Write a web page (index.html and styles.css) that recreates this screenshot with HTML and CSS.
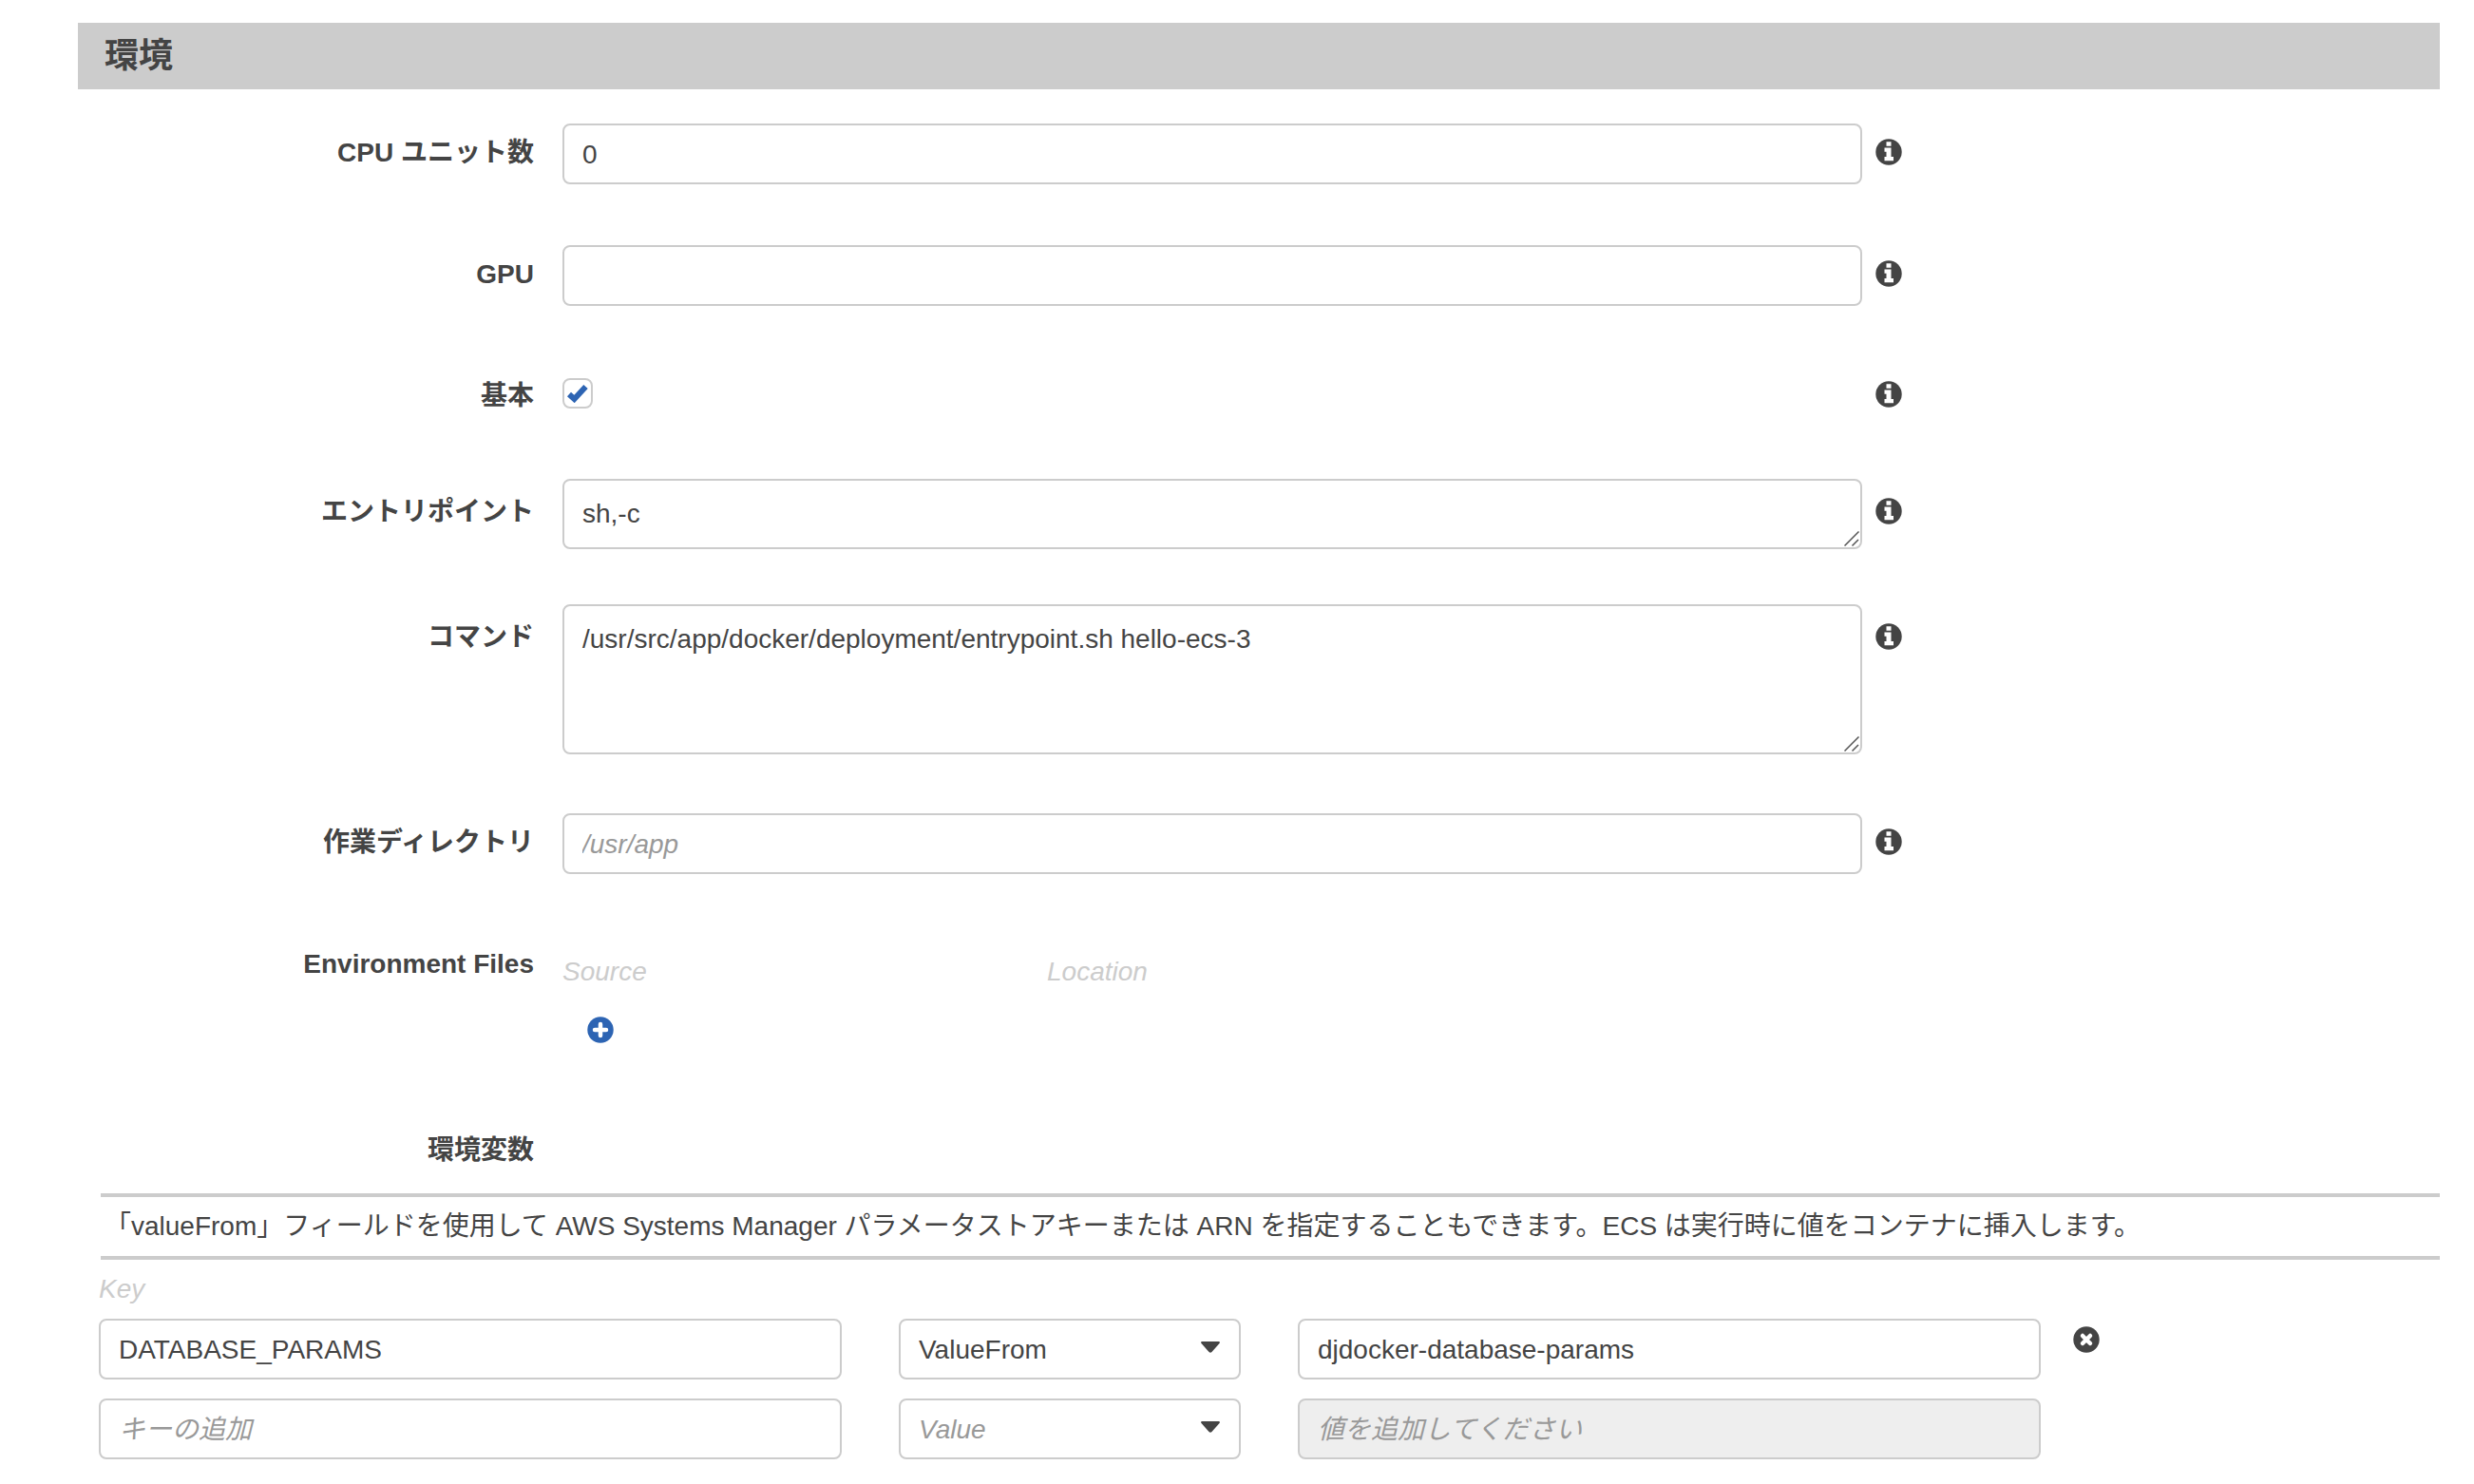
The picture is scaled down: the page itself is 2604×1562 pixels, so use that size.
FILE: index.html
```html
<!DOCTYPE html>
<html lang="ja">
<head>
<meta charset="utf-8">
<meta name="viewport" content="width=device-width, initial-scale=1">
<title>環境</title>
<link rel="stylesheet" href="styles.css">
</head>
<body>
<svg class="sprite" aria-hidden="true">
  <symbol id="info" viewBox="0 0 28 28">
    <circle cx="14" cy="14" r="13.700"/>
    <path fill="#fff" d="M11.500 3.200h5v4.500h-5zM9.500 9.500h7v9.500h2.500v4.300h-9.500v-4.300h2v-5.200h-2z"/>
  </symbol>
  <symbol id="plus" viewBox="0 0 28 28">
    <circle cx="14" cy="14" r="13.700"/>
    <path stroke="#fff" stroke-width="4.500" stroke-linecap="round" d="M14 8v12M8 14h12"/>
  </symbol>
  <symbol id="remove" viewBox="0 0 28 28">
    <circle cx="14" cy="14" r="13.700"/>
    <path stroke="#fff" stroke-width="4.500" stroke-linecap="round" d="M10 10l8 8M18 10l-8 8"/>
  </symbol>
  <symbol id="caret" viewBox="0 0 20 12">
    <path d="M1.500 0h17c1.300 0 1.900 1 1 2l-8 9c-.9 1-2.100 1-3 0l-8-9c-.9-1-.3-2 1-2z"/>
  </symbol>
  <symbol id="grip" viewBox="0 0 16 16">
    <path fill="none" stroke="#555" stroke-width="1.500" d="M.5 15.500l15-15M8.500 15.500l6.500-6.500"/>
  </symbol>
</svg>
<main class="page">
  <h2 class="section-title">環境</h2>
  <form class="form">
    <div class="row">
      <label class="label" for="cpu">CPU ユニット数</label>
      <div class="field"><input class="control" id="cpu" type="text" value="0"></div>
      <button class="icon-button info" type="button" aria-label="CPU ユニット数の情報"><svg class="icon"><use href="#info"/></svg></button>
    </div>
    <div class="row">
      <label class="label" for="gpu">GPU</label>
      <div class="field"><input class="control" id="gpu" type="text"></div>
      <button class="icon-button info" type="button" aria-label="GPU の情報"><svg class="icon"><use href="#info"/></svg></button>
    </div>
    <div class="row row-check">
      <label class="label" for="essential">基本</label>
      <div class="field check">
        <input class="checkbox" id="essential" type="checkbox" checked>
        <svg class="tick" viewBox="0 0 24 20" aria-hidden="true"><path d="M3 11l5.500 5L20.500 3"/></svg>
      </div>
      <button class="icon-button info" type="button" aria-label="基本の情報"><svg class="icon"><use href="#info"/></svg></button>
    </div>
    <div class="row row-area row-entry">
      <label class="label" for="entry">エントリポイント</label>
      <div class="field">
        <textarea class="control area" id="entry" rows="1">sh,-c</textarea>
        <svg class="grip" aria-hidden="true"><use href="#grip"/></svg>
      </div>
      <button class="icon-button info" type="button" aria-label="エントリポイントの情報"><svg class="icon"><use href="#info"/></svg></button>
    </div>
    <div class="row row-area row-command">
      <label class="label" for="command">コマンド</label>
      <div class="field">
        <textarea class="control area area-tall" id="command" rows="3">/usr/src/app/docker/deployment/entrypoint.sh hello-ecs-3</textarea>
        <svg class="grip" aria-hidden="true"><use href="#grip"/></svg>
      </div>
      <button class="icon-button info" type="button" aria-label="コマンドの情報"><svg class="icon"><use href="#info"/></svg></button>
    </div>
    <div class="row">
      <label class="label" for="workdir">作業ディレクトリ</label>
      <div class="field"><input class="control" id="workdir" type="text" placeholder="/usr/app"></div>
      <button class="icon-button info" type="button" aria-label="作業ディレクトリの情報"><svg class="icon"><use href="#info"/></svg></button>
    </div>
    <div class="row row-files">
      <div class="label">Environment Files</div>
      <div class="field files">
        <div class="files-head"><span>Source</span><span>Location</span></div>
        <button class="icon-button add" type="button" aria-label="Add environment file"><svg class="icon"><use href="#plus"/></svg></button>
      </div>
    </div>
    <div class="row row-heading">
      <div class="label">環境変数</div>
    </div>
    <p class="note">「valueFrom」フィールドを使用して AWS Systems Manager パラメータストアキーまたは ARN を指定することもできます。ECS は実行時に値をコンテナに挿入します。</p>
    <div class="vars">
      <div class="vars-head">Key</div>
      <div class="var">
        <div class="cell"><input class="control" type="text" aria-label="Key" value="DATABASE_PARAMS"></div>
        <div class="cell">
          <div class="select">
            <select class="control" aria-label="Type"><option>ValueFrom</option><option>Value</option></select>
            <svg class="caret" aria-hidden="true"><use href="#caret"/></svg>
          </div>
        </div>
        <div class="cell cell-last"><input class="control" type="text" aria-label="Value" value="djdocker-database-params"></div>
        <button class="icon-button remove" type="button" aria-label="削除"><svg class="icon"><use href="#remove"/></svg></button>
      </div>
      <div class="var">
        <div class="cell"><input class="control" type="text" aria-label="Key" placeholder="キーの追加"></div>
        <div class="cell">
          <div class="select">
            <select class="control unset" aria-label="Type"><option>Value</option><option>ValueFrom</option></select>
            <svg class="caret" aria-hidden="true"><use href="#caret"/></svg>
          </div>
        </div>
        <div class="cell cell-last"><input class="control" type="text" aria-label="Value" placeholder="値を追加してください" disabled></div>
      </div>
    </div>
  </form>
</main>
</body>
</html>
```
FILE: styles.css
```css
* {
  box-sizing: border-box;
}

body {
  margin: 0;
  background: #fff;
  color: #444;
  font: 28px/32px "Liberation Sans", "Noto Sans CJK JP", sans-serif;
}

.sprite {
  display: none;
}

.page {
  padding: 24px 36px 26px 82px;
}

.section-title {
  margin: 0 0 36px;
  padding: 0 28px;
  background: #ccc;
  font-size: 36px;
  line-height: 70px;
}

.form {
  padding-left: 22px;
}

.row {
  display: grid;
  grid-template-columns: 488fr 1368fr 608fr;
  align-items: start;
  margin-bottom: 64px;
}

.label {
  padding-right: 30px;
  font-weight: bold;
  line-height: 62px;
  text-align: right;
}

.field {
  position: relative;
  display: flex;
}

.control {
  width: 100%;
  height: 64px;
  margin: 0;
  padding: 2px 20px 0 19px;
  border: 2px solid #ccc;
  border-radius: 8px;
  background: #fff;
  color: #444;
  font: inherit;
  appearance: none;
}

.control::placeholder {
  color: #999;
  font-style: italic;
  opacity: 1;
}

.control:disabled {
  background: #eee;
}

.area {
  height: 74px;
  padding: 19px 20px 17px 19px;
  overflow: hidden;
  resize: vertical;
}

.area-tall {
  height: 158px;
}

.area::-webkit-resizer {
  display: none;
}

.grip {
  position: absolute;
  right: 3px;
  bottom: 3px;
  width: 16px;
  height: 16px;
  pointer-events: none;
}

.icon-button {
  display: flex;
  align-items: center;
  padding: 0;
  border: 0;
  background: none;
  color: #444;
  cursor: pointer;
}

.icon {
  width: 28px;
  height: 28px;
  fill: currentColor;
}

.info {
  height: 60px;
  margin-left: 14px;
  justify-self: start;
}

.row-check {
  height: 54px;
}

.row-check > .info {
  height: 58px;
}

.check {
  align-items: center;
  height: 56px;
}

.checkbox {
  width: 32px;
  height: 32px;
  margin: 0;
  border: 2px solid #ccc;
  border-radius: 8px;
  background: #fff;
  appearance: none;
}

.tick {
  position: absolute;
  left: 4px;
  width: 24px;
  height: 20px;
  fill: none;
  stroke: #2d64b3;
  stroke-width: 6;
  visibility: hidden;
  pointer-events: none;
}

.checkbox:checked + .tick {
  visibility: visible;
}

.row-area > .label,
.row-area > .info {
  margin-top: 4px;
}

.row-entry {
  margin-bottom: 58px;
}

.row-command {
  margin-bottom: 62px;
}

.row-files {
  margin-bottom: 82px;
}

.files {
  flex-direction: column;
  gap: 30px;
  padding-top: 22px;
}

.files-head {
  display: grid;
  grid-template-columns: 510fr 858fr;
  color: #ccc;
  font-style: italic;
  line-height: 34px;
}

.add {
  align-self: start;
  margin-left: 26px;
  color: #2d64b3;
}

.row-heading {
  margin-bottom: 14px;
}

.note {
  margin: 0 0 0 2px;
  padding: 0 4px;
  border: solid #ccc;
  border-width: 4px 0;
  line-height: 62px;
}

.vars-head {
  color: #ccc;
  font-style: italic;
  line-height: 62px;
}

.var {
  display: grid;
  grid-template-columns: 842fr 420fr 816fr 386fr;
  align-items: start;
  margin-bottom: 20px;
}

.cell {
  display: flex;
  padding-right: 60px;
}

.cell-last {
  padding-right: 34px;
}

.select {
  position: relative;
  width: 100%;
}

.unset {
  color: #999;
  font-style: italic;
}

.caret {
  position: absolute;
  top: 24px;
  right: 22px;
  width: 20px;
  height: 12px;
  fill: #444;
  pointer-events: none;
}

.remove {
  height: 44px;
  justify-self: start;
}
```
